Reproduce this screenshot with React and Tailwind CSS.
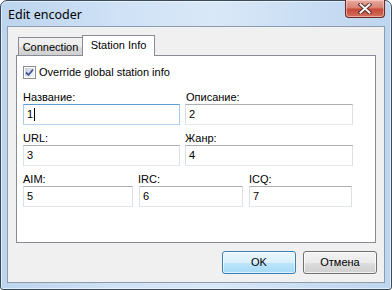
export default function App() {
  const inputBase =
    "h-[21px] border border-[#abadb3] border-l-[#dbdfe6] border-r-[#dbdfe6] border-b-[#e3e9ef] bg-white pl-[3px] flex items-center text-[11px] leading-[13px]";
  return (
    <div className="w-[392px] h-[290px] font-['Liberation_Sans',Arial,sans-serif] text-black">
      <div className="w-[392px] h-[290px] flex flex-col rounded-t-[7px] rounded-b-[3px] border border-[#3b4b5e] bg-[linear-gradient(90deg,#bcd4ee_0%,#cfe2f6_30%,#d9e8f8_55%,#c8ddf3_80%,#bdd5ee_100%)] shadow-[inset_0_0_0_1px_rgba(255,255,255,0.55)]">
        {/* Title bar */}
        <div className="h-[25px] flex items-start relative">
          <div className="pl-[7px] pt-[6px] text-[12.5px] leading-[16px] font-['Noto_Sans',sans-serif] text-[#000]">
            Edit encoder
          </div>
          <div className="ml-auto mr-[6px] -mt-px w-[40px] h-[18px] rounded-b-[4px] border border-t-0 border-[#6b2a22] bg-[linear-gradient(180deg,#e9aca2_0%,#d98174_45%,#c7493a_55%,#d3705f_100%)] shadow-[inset_0_0_0_1px_rgba(255,220,210,0.55)] flex items-center justify-center">
            <svg width="14" height="11" viewBox="0 0 14 11">
              <path d="M2.5 1.5 L11.5 9.5 M11.5 1.5 L2.5 9.5" stroke="#5a2d2a" strokeWidth="4" strokeLinecap="square" fill="none" />
              <path d="M2.5 1.5 L11.5 9.5 M11.5 1.5 L2.5 9.5" stroke="#f4f4f4" strokeWidth="2" strokeLinecap="square" fill="none" />
            </svg>
          </div>
        </div>
        {/* Client area */}
        <div className="mx-[6px] mb-[6px] flex-1 border border-[#8e9cad] bg-[#f0f0f0] flex flex-col text-[11px] leading-[13px]">
          {/* Tabs */}
          <div className="mt-[8px] ml-[8px] pl-[2px] h-[20px] flex items-end">
            <div className="h-[18px] w-[65px] border border-b-0 border-[#898c95] bg-[linear-gradient(180deg,#f2f2f2_0%,#ebebeb_50%,#dddddd_51%,#cfcfcf_100%)] flex items-center justify-center pt-[1px]">
              Connection
            </div>
            <div className="relative z-10 -ml-px -mb-px h-[21px] w-[73px] border border-b-0 border-[#898c95] bg-white flex items-center justify-center pb-[2px]">
              Station Info
            </div>
          </div>
          {/* Panel */}
          <div className="ml-[8px] mr-[8px] h-[188px] border border-[#898c95] bg-white px-[5px] pt-[10px] flex flex-col">
            <div className="flex items-center h-[13px] ml-[1px]">
              <div className="w-[13px] h-[13px] border border-[#8e8f8f] bg-white p-px">
                <div className="w-full h-full bg-[linear-gradient(135deg,#c6cdd8_0%,#e7ebf1_60%,#f4f6f8_100%)] flex items-center justify-center">
                  <svg width="9" height="9" viewBox="0 0 9 9">
                    <path d="M1 4.5 L3.5 7 L8 1.5" stroke="#3c5597" strokeWidth="1.8" fill="none" />
                  </svg>
                </div>
              </div>
              <span className="ml-[3px]">Override global station info</span>
            </div>
            {/* Row 1 */}
            <div className="mt-[12px] flex ml-[1px]">
              <div className="w-[157px] flex flex-col">
                <div className="h-[13px]">Название:</div>
                <div className="h-[21px] border border-[#5d9ad6] border-l-[#a9cbee] border-r-[#a9cbee] border-b-[#b9d6f3] bg-white pl-[3px] flex items-center">
                  <span>1</span>
                  <span className="w-px h-[13px] bg-black ml-[1px]"></span>
                </div>
              </div>
              <div className="w-[168px] ml-[5px] flex flex-col">
                <div className="h-[13px] pl-[1px]">Описание:</div>
                <div className={inputBase}>2</div>
              </div>
            </div>
            {/* Row 2 */}
            <div className="mt-[7px] flex ml-[1px]">
              <div className="w-[157px] flex flex-col">
                <div className="h-[13px]">URL:</div>
                <div className={inputBase}>3</div>
              </div>
              <div className="w-[168px] ml-[5px] flex flex-col">
                <div className="h-[13px]">Жанр:</div>
                <div className={inputBase}>4</div>
              </div>
            </div>
            {/* Row 3 */}
            <div className="mt-[7px] flex ml-[1px]">
              <div className="w-[110px] flex flex-col">
                <div className="h-[13px]">AIM:</div>
                <div className={inputBase}>5</div>
              </div>
              <div className="w-[104px] ml-[6px] flex flex-col">
                <div className="h-[13px] -ml-px">IRC:</div>
                <div className={inputBase}>6</div>
              </div>
              <div className="w-[103px] ml-[6px] flex flex-col">
                <div className="h-[13px]">ICQ:</div>
                <div className={inputBase}>7</div>
              </div>
            </div>
          </div>
          {/* Buttons */}
          <div className="mt-[8px] mr-[7px] flex justify-end gap-[7px]">
            <div className="w-[74px] h-[23px] rounded-[3px] border border-[#3c7fb1] p-px bg-[linear-gradient(180deg,#eaf6fd_0%,#d9f0fc_50%,#bee6fd_51%,#a7d9f5_100%)] flex items-center justify-center shadow-[inset_0_0_0_1px_rgba(255,255,255,0.6)]">
              OK
            </div>
            <div className="w-[74px] h-[23px] rounded-[3px] border border-[#707070] bg-[linear-gradient(180deg,#f2f2f2_0%,#ebebeb_50%,#dddddd_51%,#cfcfcf_100%)] flex items-center justify-center shadow-[inset_0_0_0_1px_rgba(255,255,255,0.7)]">
              Отмена
            </div>
          </div>
        </div>
      </div>
    </div>
  );
}
